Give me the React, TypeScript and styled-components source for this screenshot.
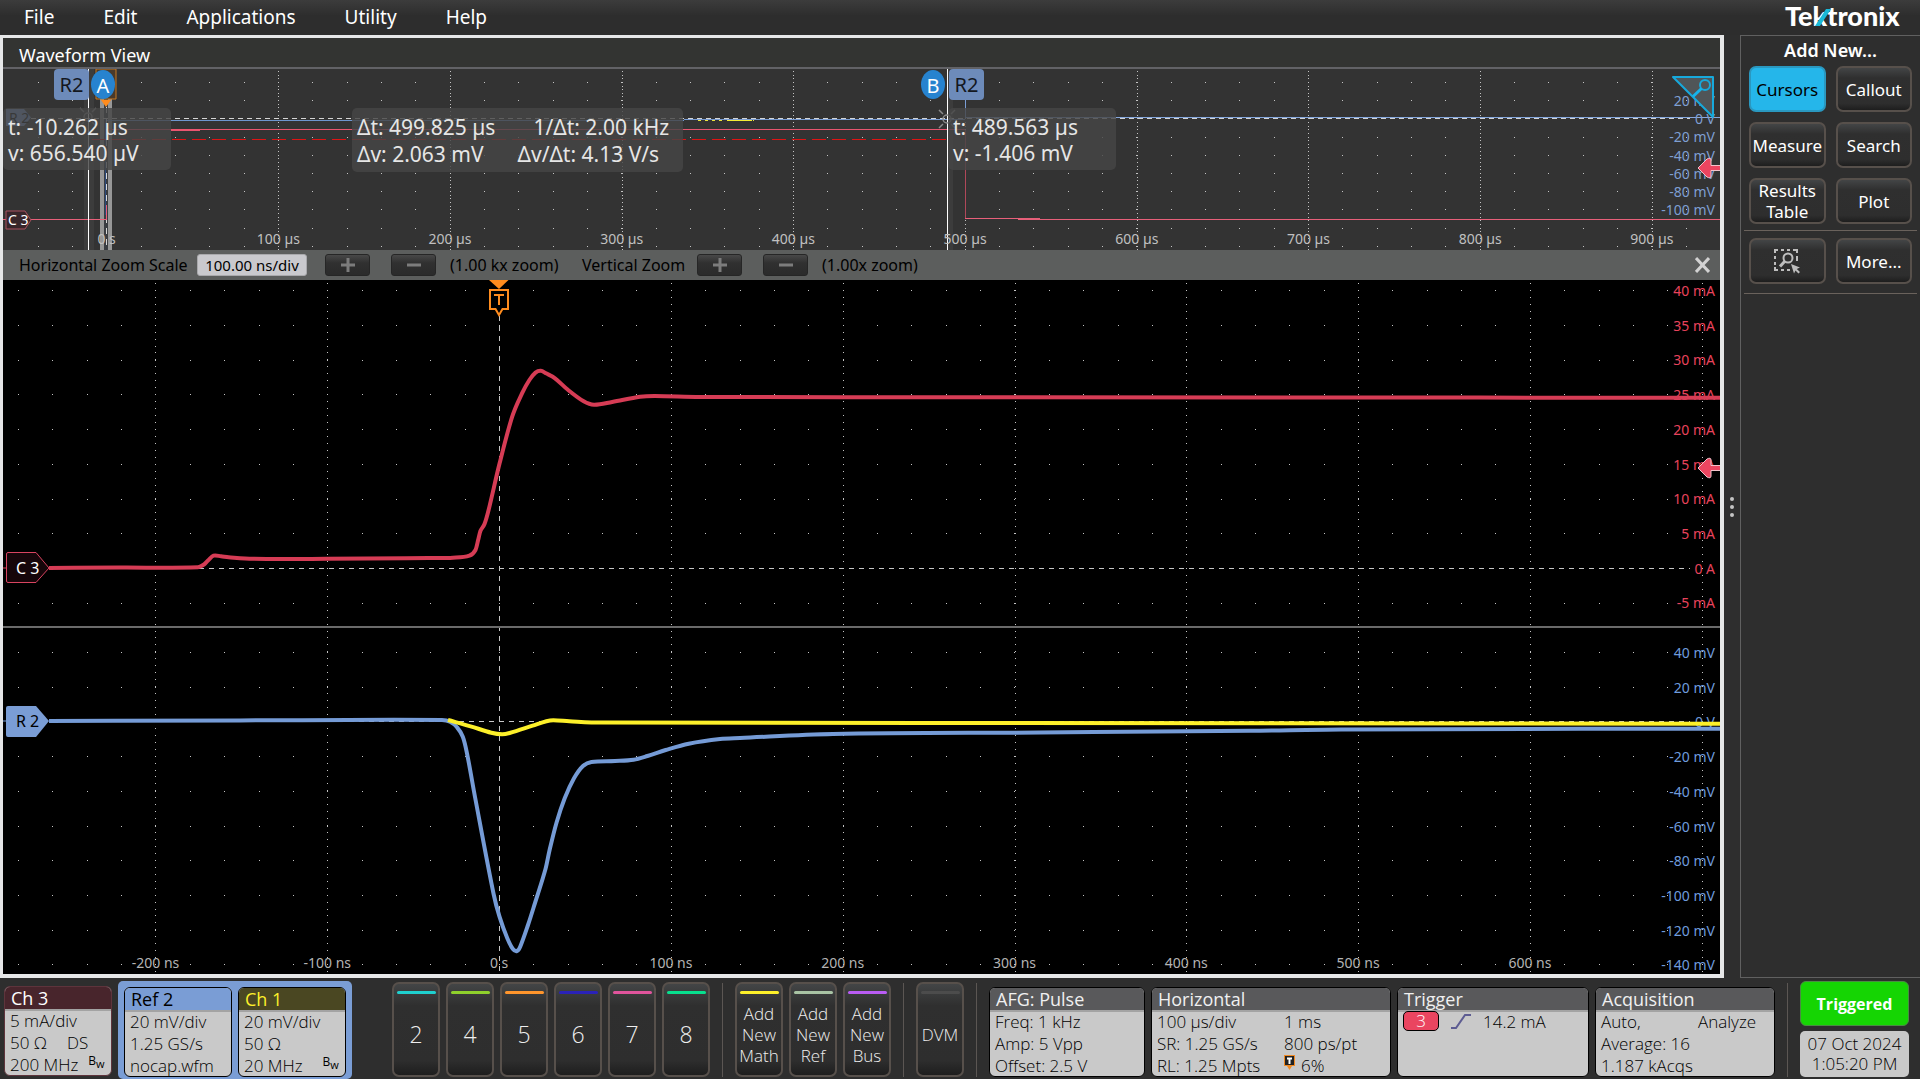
import React from "react";
import styled, { createGlobalStyle, css } from "styled-components";

const GlobalStyle = createGlobalStyle`
  * { box-sizing: border-box; }
  body {
    margin: 0;
    background: #2e2e2e;
    color: #fff;
    font-family: "Noto Sans", "Open Sans", "Liberation Sans", sans-serif;
  }
  button, input { font: inherit; color: inherit; }
`;

/* ---------- shared ---------- */

const raised = css`
  border: 2px solid #57504b;
  border-radius: 7px;
  background: linear-gradient(#434546 0, #2f2f2f 24%, #2e2e2e 84%, #1e1e1e 100%);
  color: #fff;
  padding: 0;
  cursor: pointer;
`;

/* ---------- page ---------- */

const Page = styled.div`
  display: flex;
  flex-direction: column;
  min-height: 100vh;
`;

const MenuBar = styled.header`
  display: flex;
  align-items: flex-start;
  justify-content: space-between;
  height: 35px;
  padding: 0 8px 0 24px;
  background: linear-gradient(#3c3c3c, #2d2d2d 45%);
`;

const Menu = styled.nav`
  display: flex;
  gap: 49px;
  padding-top: 5px;
`;

const MenuItem = styled.button`
  border: 0;
  padding: 0;
  background: none;
  font-size: 19px;
  line-height: 24px;
`;

const Logo = styled.svg`
  width: 128px;
  height: 34px;
  overflow: visible;
`;

const Middle = styled.div`
  display: flex;
  flex: 1;
`;

const Frame = styled.main`
  display: flex;
  flex-direction: column;
  flex: 1;
  min-width: 0;
  border: 3px solid #e6e7e8;
  border-right-width: 4px;
  border-bottom-width: 4px;
`;

const Title = styled.h1`
  margin: 0;
  height: 31px;
  padding: 3px 16px 0;
  border-bottom: 2px solid #626266;
  background: #333432;
  font-size: 18px;
  font-weight: 400;
  line-height: 28px;
`;

const Overview = styled.section`
  position: relative;
  height: 181px;
  background: #333;
`;

const Chart = styled.svg`
  display: block;
  width: 100%;
  height: 100%;
`;

const MainView = styled.section`
  flex: 1;
  min-height: 0;
  background: #000;
`;

const at = (x: number) => `${((x - 3) / 1717) * 100}%`;

const Flag = styled.span<{ $x: number; $round?: boolean }>`
  position: absolute;
  top: ${(p) => (p.$round ? 1 : 0)}px;
  left: ${(p) => at(p.$x)};
  width: ${(p) => (p.$round ? 24 : 35)}px;
  height: ${(p) => (p.$round ? 29 : 31)}px;
  border-radius: ${(p) => (p.$round ? "50%" : "4px")};
  background: ${(p) => (p.$round ? "#2783cf" : "#6d8bba")};
  color: ${(p) => (p.$round ? "#fff" : "#14181f")};
  font-size: 20px;
  line-height: 31px;
  text-align: center;
`;

const Readout = styled.div<{ $x: number; $w: number; $lh?: number }>`
  position: absolute;
  top: 39px;
  left: ${(p) => at(p.$x)};
  width: ${(p) => p.$w}px;
  padding: 6px 5px 4px;
  border-radius: 5px;
  background: rgba(70, 70, 70, 0.82);
  color: #e6e6e6;
  font-size: 21px;
  line-height: ${(p) => p.$lh ?? 26}px;
  white-space: nowrap;
`;

const Pair = styled.div<{ $gap?: number }>`
  display: flex;
  gap: ${(p) => p.$gap ?? 0}px;
`;

/* ---------- zoom bar ---------- */

const ZoomBar = styled.form`
  display: flex;
  align-items: center;
  height: 30px;
  padding: 0 10px 0 16px;
  background: #5c5e5d;
  color: #000;
  font-size: 15px;
  line-height: 20px;
  white-space: nowrap;
`;

const ZoomLabel = styled.label`
  width: 178px;
  padding-bottom: 1px;
  font-size: 16px;
`;

const ZoomInput = styled.input`
  width: 110px;
  height: 22px;
  border: 1px solid #a9a9ac;
  border-radius: 3px;
  padding: 0;
  background: #c9c9cd;
  text-align: center;
`;

const Step = styled.button`
  display: flex;
  align-items: center;
  justify-content: center;
  width: 45px;
  height: 22px;
  margin-left: 18px;
  border: 1px solid #262626;
  border-radius: 3px;
  padding: 0;
  background: linear-gradient(#484848, #303030 40%, #2b2b2b);

  & + & {
    margin-left: 21px;
  }
`;

const ZoomText = styled.span<{ $w: number }>`
  width: ${(p) => p.$w}px;
  margin-left: 14px;
  padding-bottom: 1px;
  font-size: 16px;

  & + ${Step} {
    margin-left: 14px;
  }
`;

const Close = styled.button`
  display: flex;
  margin-left: auto;
  border: 0;
  padding: 0;
  background: none;
`;

/* ---------- side panel ---------- */

const Splitter = styled.div`
  display: flex;
  flex-direction: column;
  align-items: center;
  justify-content: center;
  gap: 4px;
  width: 16px;
`;

const Dot = styled.i`
  width: 4px;
  height: 4px;
  border-radius: 50%;
  background: #c4c4c4;
`;

const Side = styled.aside`
  width: 180px;
  border: solid #606060;
  border-width: 1px 0 1px 1px;
`;

const SideTitle = styled.h2`
  margin: 0;
  padding-bottom: 2px;
  font-size: 18px;
  font-weight: 600;
  line-height: 28px;
  text-align: center;
`;

const SideGrid = styled.div`
  display: grid;
  grid-template-columns: 1fr 1fr;
  gap: 10px;
  margin: 0 3px;
  padding: 0 5px 6px;
  border-bottom: 1px solid #6a625c;

  & + & {
    padding-top: 7px;
    padding-bottom: 9px;
  }
`;

const SideButton = styled.button<{ $active?: boolean }>`
  ${raised}
  display: flex;
  align-items: center;
  justify-content: center;
  height: 46px;
  font-size: 17px;
  line-height: 21px;
  ${(p) =>
    p.$active &&
    css`
      background: #25b6ea;
      border-color: #2a98c0;
      color: #000;
    `}
`;

/* ---------- settings bar ---------- */

const Footer = styled.footer`
  display: flex;
  align-items: flex-start;
  height: 101px;
  padding: 3px 10px 0 4px;
  font-family: "Open Sans", "Noto Sans", sans-serif;
  font-weight: 300;
`;

const Row = styled.div<{ $ml?: number }>`
  display: flex;
  gap: 6px;
  margin-left: ${(p) => p.$ml ?? 0}px;
`;

const RefGroup = styled.div`
  display: flex;
  gap: 6px;
  margin-left: 6px;
  padding: 6px 6px 2px;
  border-radius: 5px;
  background: #7a9dd5;
`;

const BadgeBox = styled.section<{ $w: number; $edge: string; $mt?: number }>`
  width: ${(p) => p.$w}px;
  height: 90px;
  margin-top: ${(p) => p.$mt ?? 0}px;
  border: 1px solid ${(p) => p.$edge};
  border-radius: 6px;
  overflow: hidden;
  background: #c9c9c9;
  color: #000;
  font-size: 17px;
  line-height: 22px;
  white-space: nowrap;
`;

const BadgeHead = styled.h3<{ $bg: string; $fg: string }>`
  margin: 0;
  height: 24px;
  padding-left: 6px;
  border-bottom: 2px solid #a3a3a3;
  background: ${(p) => p.$bg};
  color: ${(p) => p.$fg};
  font-size: 18px;
  font-weight: 400;
  line-height: 22px;
`;

const BadgeBody = styled.div<{ $cols?: string }>`
  display: grid;
  grid-template-columns: ${(p) => p.$cols ?? "auto"};
  margin-top: -1px;
  padding-left: 5px;
`;

const Line = styled.span<{ $gap?: number }>`
  display: flex;
  gap: ${(p) => p.$gap ?? 10}px;
`;

const Bw = styled.b`
  font-size: 12px;
  line-height: 14px;
  sub { font-size: 11px; line-height: 1px; }
`;

const Source = styled.span`
  width: 36px;
  height: 20px;
  border: 1px solid #000;
  border-radius: 5px;
  background: #ea4560;
  color: #fff;
  line-height: 18px;
  text-align: center;
`;

const AddButton = styled.button<{ $bar: string; $big?: boolean }>`
  ${raised}
  display: flex;
  flex-direction: column;
  align-items: center;
  width: 48px;
  height: 95px;
  margin-top: 1px;
  padding-top: 7px;
  color: #eee;
  font-size: ${(p) => (p.$big ? 23 : 17)}px;
  line-height: 21px;

  &::before {
    content: "";
    width: 39px;
    height: 3px;
    border-radius: 2px;
    background: ${(p) => p.$bar};
  }
`;

const AddText = styled.span`
  display: flex;
  flex: 1;
  align-items: center;
  white-space: pre-line;
`;

const Rule = styled.i`
  align-self: stretch;
  width: 1px;
  margin: 2px 12px;
  background: #5b5653;
`;

const Status = styled.div`
  display: flex;
  flex-direction: column;
  gap: 5px;
  width: 109px;
`;

const Triggered = styled.button`
  height: 45px;
  border: 1px solid #4a8a44;
  border-radius: 6px;
  padding: 0;
  background: #15d503;
  font-size: 16px;
  font-weight: 700;
`;

const Clock = styled.time`
  height: 46px;
  padding: 3px 0;
  border-radius: 5px;
  background: #c9c9c9;
  color: #000;
  font-size: 17px;
  line-height: 20px;
  text-align: center;
  white-space: nowrap;
`;

/* ---------- graticule helpers ---------- */

function dots(x0: number, dx: number, xMax: number, ys: number[]) {
  let d = "";
  for (const y of ys) {
    for (let x = x0; x < xMax; x += dx) d += `M${Math.round(x)} ${Math.round(y) + 0.5}h1`;
  }
  return d;
}

function columns(x0: number, dx: number, n: number, y0: number, dy: number, y1: number) {
  let d = "";
  for (let i = 0; i < n; i++) {
    const x = Math.round(x0 + dx * i);
    for (let y = y0; y < y1; y += dy) d += `M${x} ${Math.round(y) + 0.5}h1`;
  }
  return d;
}

const steps = (y0: number, dy: number, n: number, skip: number) =>
  Array.from({ length: n }, (_, i) => i).filter((i) => i !== skip).map((i) => y0 + dy * i);

/* Catmull-Rom curve through the sampled points. */
function curve(pts: number[][]) {
  let d = `M${pts[0][0]} ${pts[0][1]}`;
  for (let i = 0; i < pts.length - 1; i++) {
    const a = pts[i - 1] ?? pts[i];
    const b = pts[i];
    const c = pts[i + 1];
    const e = pts[i + 2] ?? c;
    const k = (c[0] - b[0]) / 3;
    const s1 = (c[1] - a[1]) / (c[0] - a[0] || 1);
    const s2 = (e[1] - b[1]) / (e[0] - b[0] || 1);
    d += `C${b[0] + k} ${b[1] + s1 * k} ${c[0] - k} ${c[1] - s2 * k} ${c[0]} ${c[1]}`;
  }
  return d;
}

const RED = [
  [49, 568], [120, 567.6], [198, 567.2], [204, 564.5], [208, 560.5], [213.5, 555.7], [221, 556.3], [228.6, 557.2], [253, 558.8],
  [326.5, 558.8], [428.6, 558], [453, 557.7], [469.4, 555.7], [475.5, 550], [478.4, 539], [480.4, 531],
  [484.5, 524], [488.6, 510], [499.6, 463.3], [512.2, 416.7], [522.4, 392.7], [529.4, 380], [535.5, 372.6],
  [540.8, 370.7], [546, 373.3], [555, 378.3], [567.3, 389.3], [583.7, 401.3], [594, 404.8], [612.2, 402],
  [640, 396.8], [655, 396], [700, 397], [1000, 397.2], [1720, 397.8],
];
const BLUE = [
  [49, 721], [240, 720.4], [442, 720], [450, 721.7], [456.8, 727], [462.8, 736.7], [467, 753.3], [475.2, 798],
  [493.6, 894], [499.5, 916.7], [507.3, 938.3], [512.9, 949], [517, 951], [520.2, 946.7],
  [528, 925], [534.9, 903.3], [545.5, 869], [549.6, 850], [556.5, 822.7], [564.7, 798.3], [574, 778.3],
  [583, 766], [591.4, 762], [615, 761], [633.6, 759.7], [647.4, 756], [665.7, 750], [688.7, 743.7],
  [720, 739], [740, 738], [833, 734], [1040, 732.5], [1250, 730.8], [1341, 729.4], [1720, 728.7],
];
const YELLOW = [
  [448, 720], [470.6, 726.3], [491.3, 732.7], [502, 734.3], [509.6, 733], [532.6, 725.7], [546.4, 721.3],
  [553.3, 720.3], [569.3, 721.3], [601.5, 722.6], [1000, 723], [1720, 723.8],
];

const OV_DOTS =
  dots(37.5, 34.34, 1690, steps(82, 18.2, 10, 2)) + columns(278.4, 171.65, 9, 71, 3.64, 250);
const MAIN_DOTS =
  dots(18, 34.36, 1690, [...steps(290, 34.75, 10, 8), ...steps(652, 34.7, 10, 2)]) +
  columns(155.3, 171.8, 2, 283, 6.95, 974) +
  columns(671, 171.8, 7, 283, 6.95, 974);

const LOW_TIMES = ["-200 ns", "-100 ns", "0 s", "100 ns", "200 ns", "300 ns", "400 ns", "500 ns", "600 ns"];
const TIMES = ["0 s", "100 µs", "200 µs", "300 µs", "400 µs", "500 µs", "600 µs", "700 µs", "800 µs", "900 µs"];
const AMPS = ["40 mA", "35 mA", "30 mA", "25 mA", "20 mA", "15 mA", "10 mA", "5 mA", "0 A", "-5 mA"];
const VOLTS = ["40 mV", "20 mV", "0 V", "-20 mV", "-40 mV", "-60 mV", "-80 mV", "-100 mV", "-120 mV", "-140 mV"];

const LevelArrow = ({ y }: { y: number }) => (
  <path
    d={`M1698 ${y}L1707 ${y - 9}Q1711 ${y - 11} 1711 ${y - 8}V${y - 2.5}H1721V${y + 2.5}H1711V${y + 8}Q1711 ${y + 11} 1707 ${y + 9}Z`}
    fill="#ec4560"
    stroke="#f3c3cb"
    strokeWidth="1"
  />
);

const CrossMark = ({ x, y }: { x: number; y: number }) => (
  <g stroke="#8c8c8c" strokeWidth="1.5" fill="none">
    <circle cx={x} cy={y} r="4" />
    <path d={`M${x - 8} ${y - 9}l4 4M${x + 8} ${y - 9}l-4 4M${x - 8} ${y + 9}l4 -4M${x + 8} ${y + 9}l-4 -4`} />
  </g>
);

function OverviewChart() {
  return (
    <Chart viewBox="3 69 1717 181" preserveAspectRatio="none" fontSize="14">
      <path d={OV_DOTS} stroke="#c4c4c4" shapeRendering="crispEdges" />
      <rect x="84" y="69" width="10" height="181" fill="#3c3c3c" />
      <rect x="948" y="69" width="5" height="181" fill="#3c3c3c" />
      <rect x="100" y="98" width="12" height="152" fill="#979797" />
      <rect x="104" y="98" width="4" height="152" fill="#3a3d42" />
      <path d="M106.500 107V250" stroke="#d8d8d8" strokeDasharray="6 5" />
      <path d="M105.500 119V215" stroke="#2c4a7c" />
      <g shapeRendering="crispEdges" fill="none">
        <path d="M31 118.500H1690" stroke="#d5d5d5" strokeDasharray="5 4" />
        <path d="M107 120.500H684" stroke="#6d96cf" />
        <path d="M684 119.500H965M965.500 100V117" stroke="#7a9dd5" />
        <path d="M965 117.500H1720" stroke="#86a8de" />
        <path d="M698 120.500h24M732 120.500h22" stroke="#e9e43c" strokeDasharray="3 4" />
        <path d="M727 120.500h25" stroke="#f4ec34" />
        <path d="M107 129.500H965" stroke="#e85670" />
        <path d="M171 130H200" stroke="#ec5570" strokeWidth="2" />
        <path d="M965.500 130V218" stroke="#b0485a" />
        <path d="M3 219.500H106V205M965 218.500H1040M1018 219.500H1720" stroke="#e8607a" />
        <path d="M92 139.500H947" stroke="#dd1414" strokeDasharray="14 6" />
        <path d="M88.500 69V250" stroke="#fff" />
        <path d="M947.500 69V250" stroke="#fff" />
      </g>
      <path d="M6 109H24L31 117.500 24 126H6Z" fill="#7a9dd5" />
      <text x="9" y="123" fill="#000">R 2</text>
      <CrossMark x={88} y={117} />
      <CrossMark x={947} y={119} />
      <path d="M96 69H116V99H96Z" fill="#4a3a2a" stroke="#c87820" />
      <path d="M101 100H111L106 107Z" fill="#ff8c1e" />
      <path d="M6 211H25L31 220 25 229H6Z" fill="#38262a" stroke="#a8505e" />
      <text x="8" y="225" fill="#fff">C 3</text>
      <g fill="#c0c0c0" textAnchor="middle">
        {TIMES.map((t, i) => (
          <text key={t} x={106.6 + 171.7 * i} y="244">{t}</text>
        ))}
      </g>
      <g fill="#7f9fd2" textAnchor="end">
        {VOLTS.slice(1, 8).map((v, i) => (
          <text key={v} x="1715" y={106 + 18.2 * i}>{v}</text>
        ))}
      </g>
      <path d="M1673 77H1713V117Z" fill="#505558" stroke="#17a9dc" strokeWidth="2" strokeLinejoin="round" />
      <circle cx="1705" cy="85" r="5" fill="none" stroke="#17a9dc" strokeWidth="2" />
      <path d="M1701.500 88.500L1693 96.500" stroke="#17b4ea" strokeWidth="3" />
      <LevelArrow y={168} />
    </Chart>
  );
}

function MainChart() {
  return (
    <Chart viewBox="3 280 1717 694" preserveAspectRatio="none" fontSize="14">
      <path d={MAIN_DOTS} stroke="#c4c4c4" shapeRendering="crispEdges" />
      <g stroke="#c8c8c8" shapeRendering="crispEdges">
        <path d="M499.500 316V974" strokeDasharray="5 5" />
        <path d="M49 568.500H1690M49 721.500H1690" strokeDasharray="5 5" />
      </g>
      <path d="M3 627H1720" stroke="#6a6a6a" strokeWidth="2" />
      <g fill="#b4b4b4" textAnchor="middle">
        {LOW_TIMES.map((t, i) => (
          <text key={t} x={155.5 + 171.8 * i} y="968">{t}</text>
        ))}
      </g>
      <g fill="#e8435c" textAnchor="end">
        {AMPS.map((t, i) => (
          <text key={t} x="1715" y={296 + 34.7 * i}>{t}</text>
        ))}
      </g>
      <g fill="#6f9bdc" textAnchor="end">
        {VOLTS.map((t, i) => (
          <text key={t} x="1715" y={658 + 34.7 * i}>{t}</text>
        ))}
      </g>
      <g fill="none" strokeWidth="4" strokeLinejoin="round">
        <path d={curve(RED)} stroke="#d63c55" />
        <path d={curve(BLUE)} stroke="#759bd6" />
        <path d={curve(YELLOW)} stroke="#fdf02a" />
      </g>
      <path d="M3 568H6" stroke="#d63c55" />
      <path d="M3 721H6" stroke="#759bd6" />
      <path d="M8 552.500H36L49 568 36 582.500H8Q6.500 582.500 6.500 581V554Q6.500 552.500 8 552.500Z" fill="#16060a" stroke="#d94460" />
      <text x="16" y="574" fill="#fff" fontSize="16">C 3</text>
      <path d="M8 706H36L49 721 36 737H8Q6 737 6 735V708Q6 706 8 706Z" fill="#7a9dd5" />
      <text x="16" y="727" fill="#000" fontSize="16">R 2</text>
      <path d="M489 280H508.500L499 289Z" fill="#ff8c1e" />
      <path d="M490 290H508V309H502.500L499 315 495.500 309H490Z" fill="#000" stroke="#ff8c1e" strokeWidth="2" />
      <path d="M494 295H504M499 295V305" stroke="#ff8c1e" strokeWidth="2" fill="none" />
      <LevelArrow y={468} />
    </Chart>
  );
}

const StepIcon = ({ plus }: { plus?: boolean }) => (
  <svg width="16" height="16" viewBox="0 0 16 16" stroke="#7c7c7c" strokeWidth="3">
    <path d={plus ? "M1 8H15M8 1V15" : "M1 8H15"} />
  </svg>
);

const SelectIcon = () => (
  <svg width="28" height="26" viewBox="0 0 28 26" fill="none" stroke="#bdbdbd" strokeWidth="2">
    <path d="M2 5V2H5M8 2H11M14 2H17M20 2H24V5M2 8V11M2 14V17M2 19V22H5M8 22H11M14 22H17M24 8V13" />
    <circle cx="15" cy="10" r="4.500" />
    <path d="M12 13L7 18.500" strokeWidth="3" />
    <path d="M18 16L27 19.500 23.800 21 27 24 25.500 25.500 22.500 22.500 21 25.500Z" fill="#bdbdbd" stroke="none" />
  </svg>
);

interface BadgeProps {
  title: string;
  w: number;
  bg?: string;
  fg?: string;
  edge?: string;
  mt?: number;
  cols?: string;
  children: React.ReactNode;
}

const Badge = ({ title, w, bg = "#59595b", fg = "#f0f0f0", edge = "#000", mt, cols, children }: BadgeProps) => (
  <BadgeBox $w={w} $edge={edge} $mt={mt}>
    <BadgeHead $bg={bg} $fg={fg}>{title}</BadgeHead>
    <BadgeBody $cols={cols}>{children}</BadgeBody>
  </BadgeBox>
);

const Bandwidth = () => (
  <Bw>B<sub>w</sub></Bw>
);

const CHANNELS: [string, string][] = [
  ["2", "#1fd0cf"], ["4", "#8fd02c"], ["5", "#ff952c"], ["6", "#2a22b8"], ["7", "#e0549c"], ["8", "#08df8e"],
];
const ADDERS: [string, string][] = [
  ["Add\nNew\nMath", "#fdf02a"], ["Add\nNew\nRef", "#a9c3a4"], ["Add\nNew\nBus", "#b95cf4"],
];

export default function App() {
  return (
    <>
      <GlobalStyle />
      <Page>
        <MenuBar>
          <Menu>
            {["File", "Edit", "Applications", "Utility", "Help"].map((m) => (
              <MenuItem key={m}>{m}</MenuItem>
            ))}
          </Menu>
          <Logo viewBox="0 0 128 34" role="img" aria-label="Tektronix">
            <text x="1" y="26" fill="#fff" fontFamily="Lato, sans-serif" fontWeight="900" fontSize="27">Tektronix</text>
            <path d="M31 26L42 9H47L36 26Z" fill="#19b9d8" />
          </Logo>
        </MenuBar>

        <Middle>
          <Frame>
            <Title>Waveform View</Title>
            <Overview>
              <OverviewChart />
              <Flag $x={54}>R2</Flag>
              <Flag $x={91} $round>A</Flag>
              <Flag $x={921} $round>B</Flag>
              <Flag $x={949}>R2</Flag>
              <Readout $x={3} $w={168}>
                <Pair>t: -10.262 µs</Pair>
                <Pair>v: 656.540 µV</Pair>
              </Readout>
              <Readout $x={352} $w={331} $lh={27}>
                <Pair $gap={38}>
                  <span>Δt: 499.825 µs</span>
                  <span>1/Δt: 2.00 kHz</span>
                </Pair>
                <Pair $gap={34}>
                  <span>Δv: 2.063 mV</span>
                  <span>Δv/Δt: 4.13 V/s</span>
                </Pair>
              </Readout>
              <Readout $x={948} $w={168}>
                <Pair>t: 489.563 µs</Pair>
                <Pair>v: -1.406 mV</Pair>
              </Readout>
            </Overview>
            <ZoomBar>
              <ZoomLabel htmlFor="hscale">Horizontal Zoom Scale</ZoomLabel>
              <ZoomInput id="hscale" defaultValue="100.00 ns/div" />
              <Step type="button" aria-label="Increase horizontal zoom"><StepIcon plus /></Step>
              <Step type="button" aria-label="Decrease horizontal zoom"><StepIcon /></Step>
              <ZoomText $w={118}>(1.00 kx zoom)</ZoomText>
              <ZoomText $w={101}>Vertical Zoom</ZoomText>
              <Step type="button" aria-label="Increase vertical zoom"><StepIcon plus /></Step>
              <Step type="button" aria-label="Decrease vertical zoom"><StepIcon /></Step>
              <ZoomText $w={100}>(1.00x zoom)</ZoomText>
              <Close type="button" aria-label="Close zoom">
                <svg width="15" height="16" viewBox="0 0 15 16" stroke="#d2d2d2" strokeWidth="3">
                  <path d="M1 1L14 15M14 1L1 15" />
                </svg>
              </Close>
            </ZoomBar>
            <MainView>
              <MainChart />
            </MainView>
          </Frame>
          <Splitter>
            <Dot />
            <Dot />
            <Dot />
          </Splitter>
          <Side>
            <SideTitle>Add New...</SideTitle>
            <SideGrid>
              <SideButton $active>Cursors</SideButton>
              <SideButton>Callout</SideButton>
              <SideButton>Measure</SideButton>
              <SideButton>Search</SideButton>
              <SideButton>Results<br />Table</SideButton>
              <SideButton>Plot</SideButton>
            </SideGrid>
            <SideGrid>
              <SideButton aria-label="Zoom selection"><SelectIcon /></SideButton>
              <SideButton>More...</SideButton>
            </SideGrid>
          </Side>
        </Middle>

        <Footer>
          <Badge title="Ch 3" w={108} bg="#48252c" fg="#fff" edge="#5e343c" mt={5}>
            <Line>5 mA/div</Line>
            <Line $gap={20}><span>50 Ω</span><span>DS</span></Line>
            <Line><span>200 MHz</span><Bandwidth /></Line>
          </Badge>
          <RefGroup>
            <Badge title="Ref 2" w={108} bg="#7a9dd5" fg="#000">
              <Line>20 mV/div</Line>
              <Line>1.25 GS/s</Line>
              <Line>nocap.wfm</Line>
            </Badge>
            <Badge title="Ch 1" w={108} bg="#4a4722" fg="#fdf02a">
              <Line>20 mV/div</Line>
              <Line>50 Ω</Line>
              <Line $gap={20}><span>20 MHz</span><Bandwidth /></Line>
            </Badge>
          </RefGroup>
          <Row $ml={40}>
            {CHANNELS.map(([t, c]) => (
              <AddButton key={t} $bar={c} $big><AddText>{t}</AddText></AddButton>
            ))}
          </Row>
          <Rule />
          <Row>
            {ADDERS.map(([t, c]) => (
              <AddButton key={t} $bar={c}><AddText>{t}</AddText></AddButton>
            ))}
          </Row>
          <Rule />
          <Row>
            <AddButton $bar="#4c4c4c"><AddText>DVM</AddText></AddButton>
          </Row>
          <Rule />
          <Row>
            <Badge title="AFG: Pulse" w={156} mt={6}>
              <Line>Freq: 1 kHz</Line>
              <Line>Amp: 5 Vpp</Line>
              <Line>Offset: 2.5 V</Line>
            </Badge>
            <Badge title="Horizontal" w={240} mt={6} cols="127px auto">
              <Line>100 µs/div</Line>
              <Line>1 ms</Line>
              <Line>SR: 1.25 GS/s</Line>
              <Line>800 ps/pt</Line>
              <Line>RL: 1.25 Mpts</Line>
              <Line $gap={6}>
                <svg width="11" height="15" viewBox="0 0 11 15">
                  <path d="M0 0H11V11H8L5.500 15 3 11H0Z" fill="#f08a24" />
                  <path d="M1 1H10V10H1Z" fill="#222" />
                  <path d="M3 3.500H8M5.500 3V9" stroke="#fff" strokeWidth="2" />
                </svg>
                6%
              </Line>
            </Badge>
            <Badge title="Trigger" w={192} mt={6}>
              <Line $gap={12}>
                <Source>3</Source>
                <svg width="20" height="20" viewBox="0 0 20 20" fill="none" stroke="#5d5c92" strokeWidth="2">
                  <path d="M0 17H5L14 4H20" />
                </svg>
                14.2 mA
              </Line>
            </Badge>
            <Badge title="Acquisition" w={180} mt={6} cols="97px auto">
              <Line>Auto,</Line>
              <Line>Analyze</Line>
              <Line>Average: 16</Line>
              <Line />
              <Line>1.187 kAcqs</Line>
            </Badge>
          </Row>
          <Rule />
          <Status>
            <Triggered>Triggered</Triggered>
            <Clock>07 Oct 2024<br />1:05:20 PM</Clock>
          </Status>
        </Footer>
      </Page>
    </>
  );
}
